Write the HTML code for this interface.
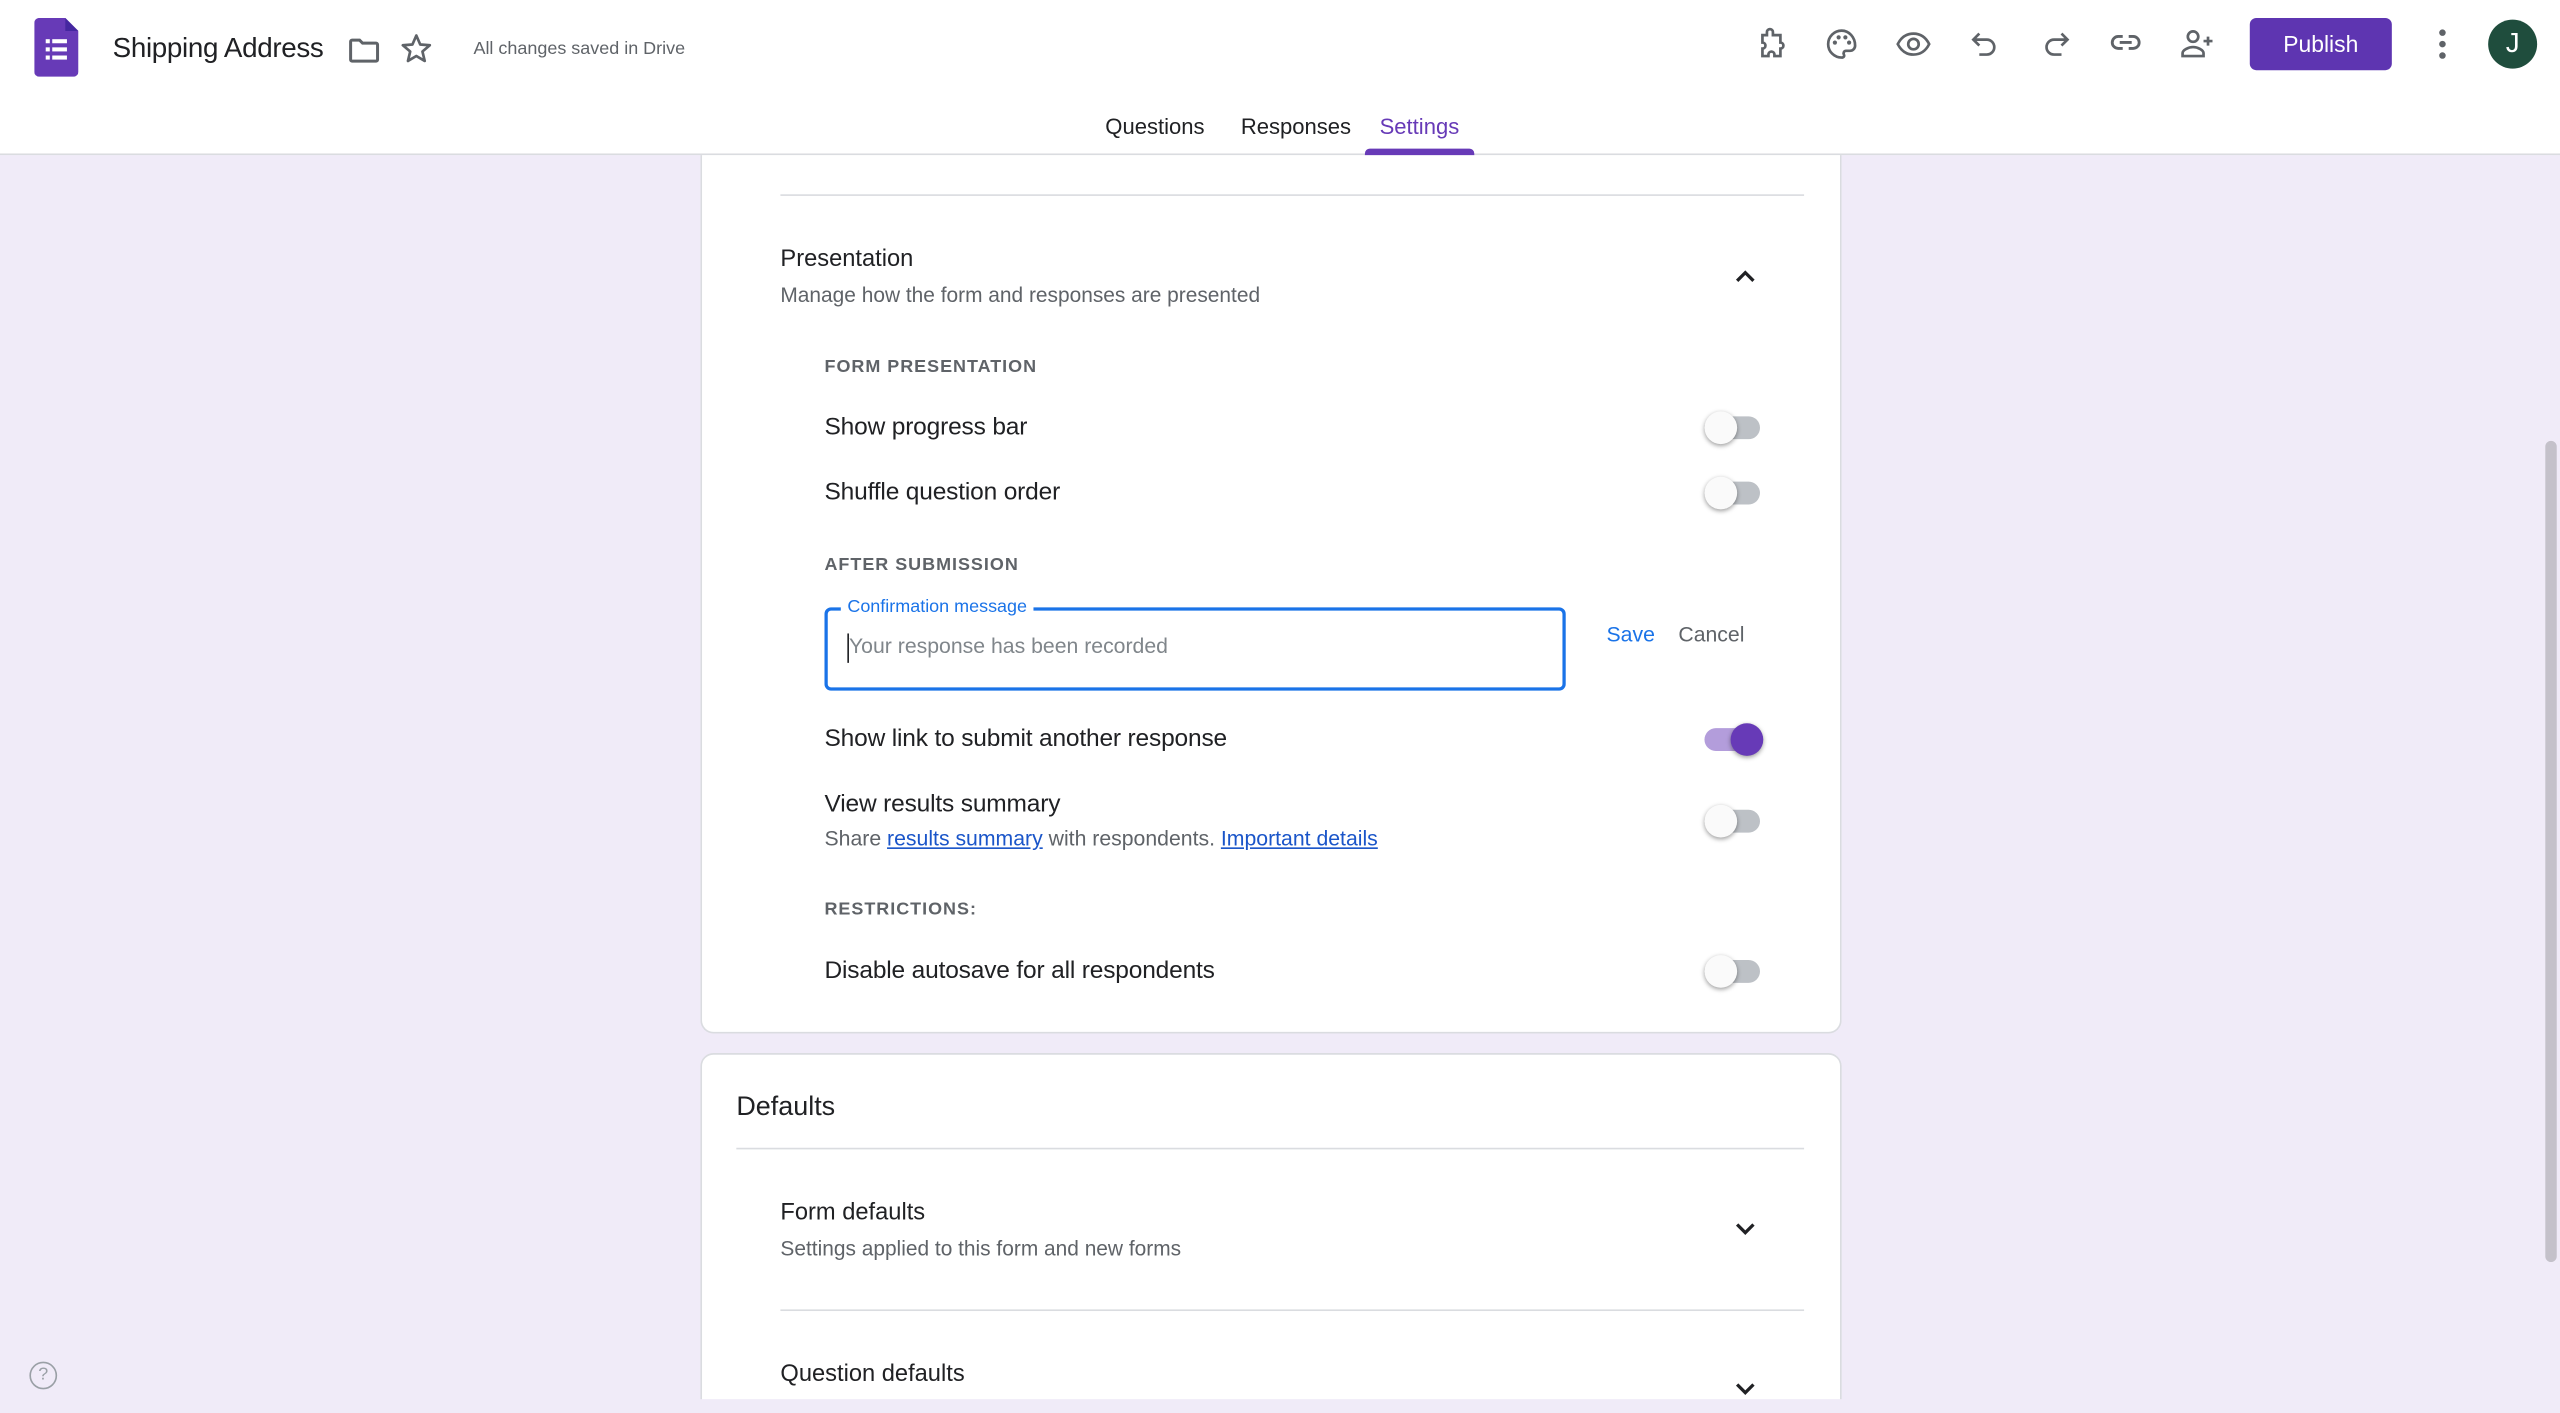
<!DOCTYPE html>
<html><head><meta charset="utf-8"><style>
*{margin:0;padding:0;box-sizing:border-box}
html,body{width:2560px;height:1413px;overflow:hidden;background:#f0ebf8;font-family:"Liberation Sans",Arial,sans-serif;color:#202124}
#s{position:absolute;left:0;top:0;width:1568px;height:865.5px;transform:scale(1.63265);transform-origin:0 0;background:#f0ebf8;overflow:hidden}
.a{position:absolute;white-space:nowrap}
.hdr{position:absolute;left:0;top:0;width:1568px;height:95px;background:#fff;border-bottom:1px solid #dadce0;z-index:5}
.ic{position:absolute;width:22px;height:22px}
.card{position:absolute;background:#fff;border:1px solid #dadce0;border-radius:8px}
.cap{font-size:11px;font-weight:bold;letter-spacing:.6px;color:#5f6368}
.lbl{font-size:15px;color:#202124;letter-spacing:-.1px}
.tg{position:absolute;width:34px;height:14px;border-radius:7px;background:#bdc1c6}
.tg::after{content:"";position:absolute;left:0;top:-3px;width:20px;height:20px;border-radius:50%;background:#fafafa;box-shadow:0 1px 3px rgba(0,0,0,.4)}
.tg.on{background:#b39ddb}
.tg.on::after{left:16px;background:#673ab7}
.ln{position:absolute;height:1px;background:#dadce0}
</style></head><body><div id="s">
<div class="hdr">
<svg class="a" style="left:21px;top:11px" width="27" height="36" viewBox="0 0 27 36"><path d="M3 0h16l8 8v25a3 3 0 0 1-3 3H3a3 3 0 0 1-3-3V3a3 3 0 0 1 3-3z" fill="#673ab7"/><path d="M19 0v8h8z" fill="#4527a0"/><g fill="#fff"><rect x="7" y="13" width="2.5" height="2.5"/><rect x="11" y="13" width="9" height="2.5"/><rect x="7" y="18" width="2.5" height="2.5"/><rect x="11" y="18" width="9" height="2.5"/><rect x="7" y="23" width="2.5" height="2.5"/><rect x="11" y="23" width="9" height="2.5"/></g></svg>
<div class="a" style="left:69px;top:20px;font-size:17px;letter-spacing:-.2px">Shipping Address</div>
<svg class="ic" style="left:212px;top:20px" viewBox="0 0 24 24"><path d="M3 6a1 1 0 0 1 1-1h5l2 2h9a1 1 0 0 1 1 1v10a1 1 0 0 1-1 1H4a1 1 0 0 1-1-1z" fill="none" stroke="#5f6368" stroke-width="2"/></svg>
<svg class="ic" style="left:244px;top:19px" viewBox="0 0 24 24"><path d="M12 3l2.6 6 6.4.5-4.9 4.2 1.5 6.3L12 16.7 6.4 20l1.5-6.3L3 9.5 9.4 9z" fill="none" stroke="#5f6368" stroke-width="1.8" stroke-linejoin="round"/></svg>
<div class="a" style="left:290px;top:24px;font-size:11px;color:#5f6368">All changes saved in Drive</div>
<svg class="ic" style="left:1074px;top:16px" viewBox="0 0 24 24"><path d="M9 4a2 2 0 0 1 4 0v2h5v5a2 2 0 0 1 0 4v5h-4v-1a2 2 0 0 0-4 0v1H6v-5a2 2 0 0 0 0-4V6h3z" fill="none" stroke="#5f6368" stroke-width="1.8"/></svg>
<svg class="ic" style="left:1117px;top:16px" viewBox="0 0 24 24"><path d="M12 3a9 9 0 0 0 0 18c1.5 0 2-1 1.5-2s0-2.5 1.5-2.5h2.5A3.5 3.5 0 0 0 21 13c0-5.5-4-10-9-10z" fill="none" stroke="#5f6368" stroke-width="1.8"/><g fill="#5f6368"><circle cx="7.5" cy="11" r="1.4"/><circle cx="10" cy="7.5" r="1.4"/><circle cx="14.5" cy="7.5" r="1.4"/><circle cx="17" cy="11" r="1.4"/></g></svg>
<svg class="ic" style="left:1161px;top:16px" viewBox="0 0 24 24"><path d="M1.5 12C4 7 8 5 12 5s8 2 10.5 7C20 17 16 19 12 19s-8-2-10.5-7z" fill="none" stroke="#5f6368" stroke-width="1.8"/><circle cx="12" cy="12" r="3.5" fill="none" stroke="#5f6368" stroke-width="1.8"/></svg>
<svg class="ic" style="left:1205px;top:16px" viewBox="0 0 24 24"><path d="M8 5L4 9l4 4M4 9h9a5 5 0 0 1 0 10H8" fill="none" stroke="#5f6368" stroke-width="1.8"/></svg>
<svg class="ic" style="left:1248px;top:16px" viewBox="0 0 24 24"><path d="M16 5l4 4-4 4M20 9h-9a5 5 0 0 0 0 10h5" fill="none" stroke="#5f6368" stroke-width="1.8"/></svg>
<svg class="ic" style="left:1291px;top:15px" viewBox="0 0 24 24"><path d="M10 8H7a4 4 0 0 0 0 8h3M14 8h3a4 4 0 0 1 0 8h-3M8 12h8" fill="none" stroke="#5f6368" stroke-width="1.9"/></svg>
<svg class="ic" style="left:1335px;top:16px" viewBox="0 0 24 24"><circle cx="9" cy="7" r="3.5" fill="none" stroke="#5f6368" stroke-width="1.8"/><path d="M2 20v-2c0-2 4-4 7-4s7 2 7 4v2z" fill="none" stroke="#5f6368" stroke-width="1.8"/><path d="M19 7v6M16 10h6" stroke="#5f6368" stroke-width="1.8"/></svg>
<div class="a" style="left:1378px;top:11px;width:87px;height:32px;background:#5e35b1;border-radius:4px;color:#fff;font-size:14px;text-align:center;line-height:32px">Publish</div>
<svg class="a" style="left:1490px;top:16px" width="12" height="22" viewBox="0 0 12 22"><g fill="#5f6368"><circle cx="6" cy="4" r="2"/><circle cx="6" cy="11" r="2"/><circle cx="6" cy="18" r="2"/></g></svg>
<div class="a" style="left:1524px;top:12px;width:30px;height:30px;border-radius:50%;background:#1f4d3d;color:#fff;font-size:17px;text-align:center;line-height:30px">J</div>
<div class="a" style="left:677px;top:70px;font-size:13.5px">Questions</div>
<div class="a" style="left:760px;top:70px;font-size:13.5px">Responses</div>
<div class="a" style="left:845px;top:70px;font-size:13.5px;color:#673ab7">Settings</div>
<div class="a" style="left:836px;top:91px;width:67px;height:4px;background:#673ab7;border-radius:3px 3px 0 0"></div>
</div>

<div class="card" style="left:429px;top:88px;width:699px;height:545px;border-top:none;border-radius:0 0 8px 8px"></div>
<div class="ln" style="left:478px;top:119px;width:627px"></div>
<div class="a" style="left:478px;top:151px;font-size:14.5px">Presentation</div>
<div class="a" style="left:478px;top:173px;font-size:12.8px;color:#5f6368">Manage how the form and responses are presented</div>
<svg class="a" style="left:1061px;top:161px" width="16" height="16" viewBox="0 0 16 16"><path d="M3 11l5-5 5 5" fill="none" stroke="#202124" stroke-width="2"/></svg>
<div class="a cap" style="left:505px;top:219px">FORM PRESENTATION</div>
<div class="a lbl" style="left:505px;top:253px">Show progress bar</div>
<div class="tg" style="left:1044px;top:255px"></div>
<div class="a lbl" style="left:505px;top:293px">Shuffle question order</div>
<div class="tg" style="left:1044px;top:295px"></div>
<div class="a cap" style="left:505px;top:340px">AFTER SUBMISSION</div>
<div class="a" style="left:505px;top:372px;width:454px;height:51px;border:2px solid #1a73e8;border-radius:4px"></div>
<div class="a" style="left:515px;top:366px;padding:0 4px;background:#fff;font-size:11px;color:#1a73e8">Confirmation message</div>
<div class="a" style="left:519px;top:388px;width:1px;height:18px;background:#202124"></div>
<div class="a" style="left:520px;top:388px;font-size:13px;color:#80868b">Your response has been recorded</div>
<div class="a" style="left:984px;top:381px;font-size:13px;color:#1a73e8">Save</div>
<div class="a" style="left:1028px;top:381px;font-size:13px;color:#5f6368">Cancel</div>
<div class="a lbl" style="left:505px;top:444px">Show link to submit another response</div>
<div class="tg on" style="left:1044px;top:446px"></div>
<div class="a lbl" style="left:505px;top:484px">View results summary</div>
<div class="a" style="left:505px;top:506px;font-size:13px;color:#5f6368">Share <span style="color:#1a55c9;text-decoration:underline">results summary</span> with respondents. <span style="color:#1a55c9;text-decoration:underline">Important details</span></div>
<div class="tg" style="left:1044px;top:496px"></div>
<div class="a cap" style="left:505px;top:551px">RESTRICTIONS:</div>
<div class="a lbl" style="left:505px;top:586px">Disable autosave for all respondents</div>
<div class="tg" style="left:1044px;top:588px"></div>

<div class="card" style="left:429px;top:645px;width:699px;height:230px"></div>
<div class="a" style="left:451px;top:669px;font-size:16.5px">Defaults</div>
<div class="ln" style="left:451px;top:703px;width:654px"></div>
<div class="a" style="left:478px;top:735px;font-size:14.5px">Form defaults</div>
<div class="a" style="left:478px;top:757px;font-size:12.8px;color:#5f6368">Settings applied to this form and new forms</div>
<svg class="a" style="left:1061px;top:745px" width="16" height="16" viewBox="0 0 16 16"><path d="M3 5l5 5 5-5" fill="none" stroke="#202124" stroke-width="2"/></svg>
<div class="ln" style="left:478px;top:802px;width:627px"></div>
<div class="a" style="left:478px;top:834px;font-size:14.5px">Question defaults</div>
<svg class="a" style="left:1061px;top:843px" width="16" height="16" viewBox="0 0 16 16"><path d="M3 5l5 5 5-5" fill="none" stroke="#202124" stroke-width="2"/></svg>
<div class="a" style="left:0;top:857px;width:1568px;height:30px;background:#f0ebf8"></div>

<div class="a" style="left:1559px;top:270px;width:7px;height:503px;background:#c4c1ca;border-radius:4px"></div>
<div class="a" style="left:18px;top:834px;width:17px;height:17px;border:1.5px solid #9aa0a6;border-radius:50%;font-size:11px;color:#9aa0a6;text-align:center;line-height:14px">?</div>
</div></body></html>
